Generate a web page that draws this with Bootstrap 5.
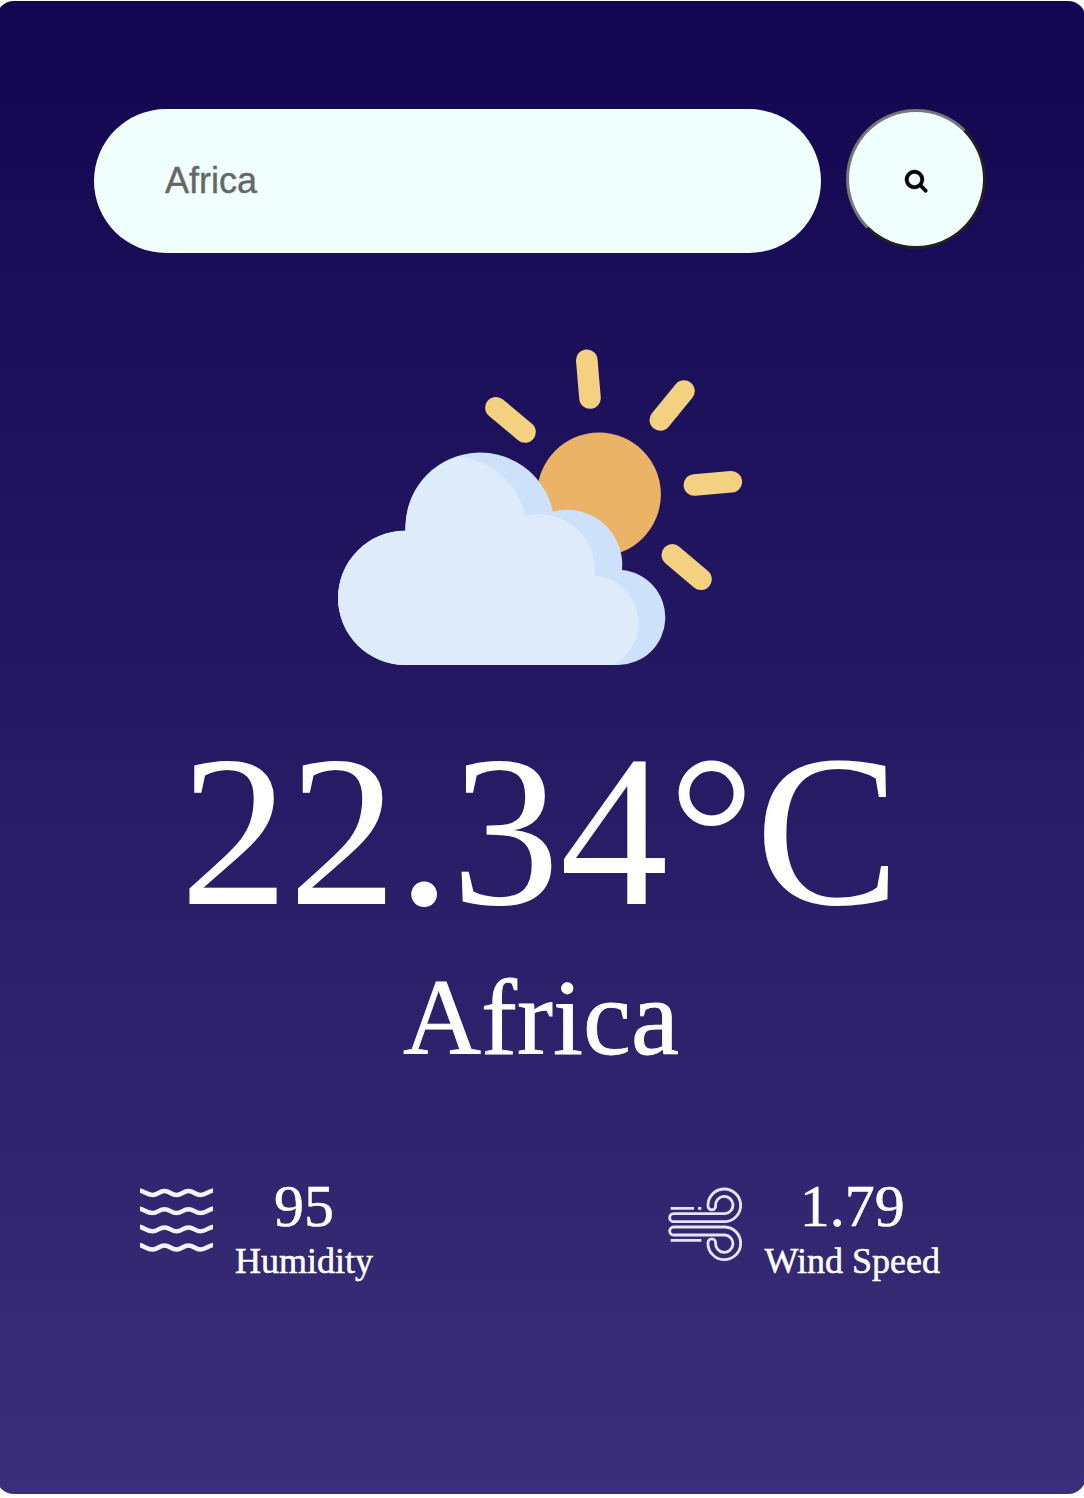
<!DOCTYPE html>
<html lang="en">
<head>
<meta charset="utf-8">
<meta name="viewport" content="width=device-width, initial-scale=1">
<title>Weather</title>
<link href="https://cdn.jsdelivr.net/npm/bootstrap@5.3.0/dist/css/bootstrap.min.css" rel="stylesheet">
<style>
body{background:#fff;overflow:hidden;font-family:"Liberation Serif",serif}
.weather{width:1090px;height:1493px;margin:1px 0 0 -4px;padding:108px 100px 0 98px;border-radius:18px;background:linear-gradient(180deg,#120650,#3a2e79);color:#fff}
.search-row{gap:25px}
.search-box{height:144px;border:0;border-radius:72px;padding:0 71px;background:#f0fffe!important;font:36px "Liberation Sans",sans-serif}
.search-box::placeholder{color:#666;opacity:1;-webkit-text-stroke:.4px #666}
.search-btn{width:140px;height:140px;border:3px solid;border-color:#767676 #212121 #212121 #767676;background:#f0fffe;color:#000}
.search-btn svg{margin-top:5px;overflow:visible}
.sky{margin-top:96px}
.temp{margin:57px 0 0;font-size:217px;line-height:216px;font-weight:400;white-space:nowrap}
.city{margin:25px 0 0 2px;font-size:108px;line-height:108px;font-weight:400;-webkit-text-stroke:.8px #fff}
.details{margin-top:104px;padding:0 46px}
.detail{gap:22px}
.detail svg{margin-top:11px}
.num{font-size:60px;line-height:60px;-webkit-text-stroke:.5px #fff}
.lbl{font-size:36px;line-height:36px;margin-top:7px;-webkit-text-stroke:.5px #fff}
</style>
</head>
<body>
<main class="weather">
  <form class="search-row d-flex align-items-start" onsubmit="return false">
    <input class="search-box form-control flex-fill shadow-none" type="text" placeholder="Africa" aria-label="City">
    <button class="search-btn rounded-circle d-flex align-items-center justify-content-center flex-shrink-0 p-0" type="submit" aria-label="Search">
      <svg width="22.4" height="22.4" viewBox="0 128 1664 1664"><path fill="currentColor" stroke="currentColor" stroke-width="30" d="M1152 832q0-185-131.500-316.500t-316.500-131.500-316.500 131.500-131.500 316.500 131.500 316.500 316.500 131.500 316.500-131.500 131.500-316.500zm512 832q0 52-38 90t-90 38q-54 0-90-38l-343-342q-179 124-399 124-143 0-273.500-55.500t-225-150-150-225-55.500-273.500 55.500-273.500 150-225 225-150 273.500-55.500 273.500 55.500 225 150 150 225 55.500 273.500q0 220-124 399l343 343q37 37 37 90z"/></svg>
    </button>
  </form>
  <section class="text-center">
    <svg class="sky d-block mx-auto" width="404" height="317" viewBox="338 349 404 317">
      <g stroke="#f4d180" stroke-width="21.600" stroke-linecap="round">
        <path d="M586.800 360.300 590 398M684 391 660.300 420M731.300 481.800 694.400 485M672.300 554.900 701 579.200M496 407.700 525 432"/>
      </g>
      <circle cx="599" cy="494.400" r="61.900" fill="#eab366"/>
      <path fill="#cde1fa" d="M405.500 665A67.200 67.200 0 0 1 338 598A67.200 67.200 0 0 1 405.500 530.800A74.600 74.600 0 0 1 553 511.700A55 55 0 0 1 622 570A47.600 47.600 0 0 1 618.500 665Z"/>
      <path fill="#deebfb" d="M405.500 665A67.200 67.200 0 0 1 338 598A67.200 67.200 0 0 1 405.500 530.800A74.600 74.600 0 0 1 458 456.800A74.300 74.300 0 0 1 525 516.300A55 55 0 0 1 594.300 575.300A48 48 0 0 1 614 665Z"/>
    </svg>
    <h1 class="temp">22.34°C</h1>
    <h2 class="city">Africa</h2>
  </section>
  <section class="details d-flex justify-content-between">
    <div class="detail d-flex align-items-start">
      <svg width="73" height="66" viewBox="140 1187 73 66" fill="none" stroke="#f4f3f9" stroke-width="4.500">
        <path id="wave" d="M139 1190.300C144 1191 147 1194.900 152.500 1194.900S159 1191 164.500 1191 171 1194.900 176.500 1194.900 183 1191 188.500 1191 195 1194.900 200.500 1194.900 208 1191 214 1190.300"/>
        <use href="#wave" y="18.200"/><use href="#wave" y="36.400"/><use href="#wave" y="54.600"/>
      </svg>
      <div class="text-center"><div class="num">95</div><div class="lbl">Humidity</div></div>
    </div>
    <div class="detail d-flex align-items-start">
      <svg width="75" height="75" viewBox="21 23 225 225" fill="none" stroke="#e6e4f2" stroke-width="8.500">
        <g id="gust"><path d="M195 127A49 49 0 1 0 144 80A11.500 11.500 0 0 0 167 80A26 26 0 1 1 195 103H41A12 12 0 0 0 41 127Z"/></g>
        <use href="#gust" transform="matrix(1 0 0 -1 0 270)"/>
        <path d="M32 87H102M114 87H124M32 183H124"/>
      </svg>
      <div class="text-center"><div class="num">1.79</div><div class="lbl">Wind Speed</div></div>
    </div>
  </section>
</main>
<script src="https://cdn.jsdelivr.net/npm/bootstrap@5.3.0/dist/js/bootstrap.bundle.min.js"></script>
</body>
</html>
